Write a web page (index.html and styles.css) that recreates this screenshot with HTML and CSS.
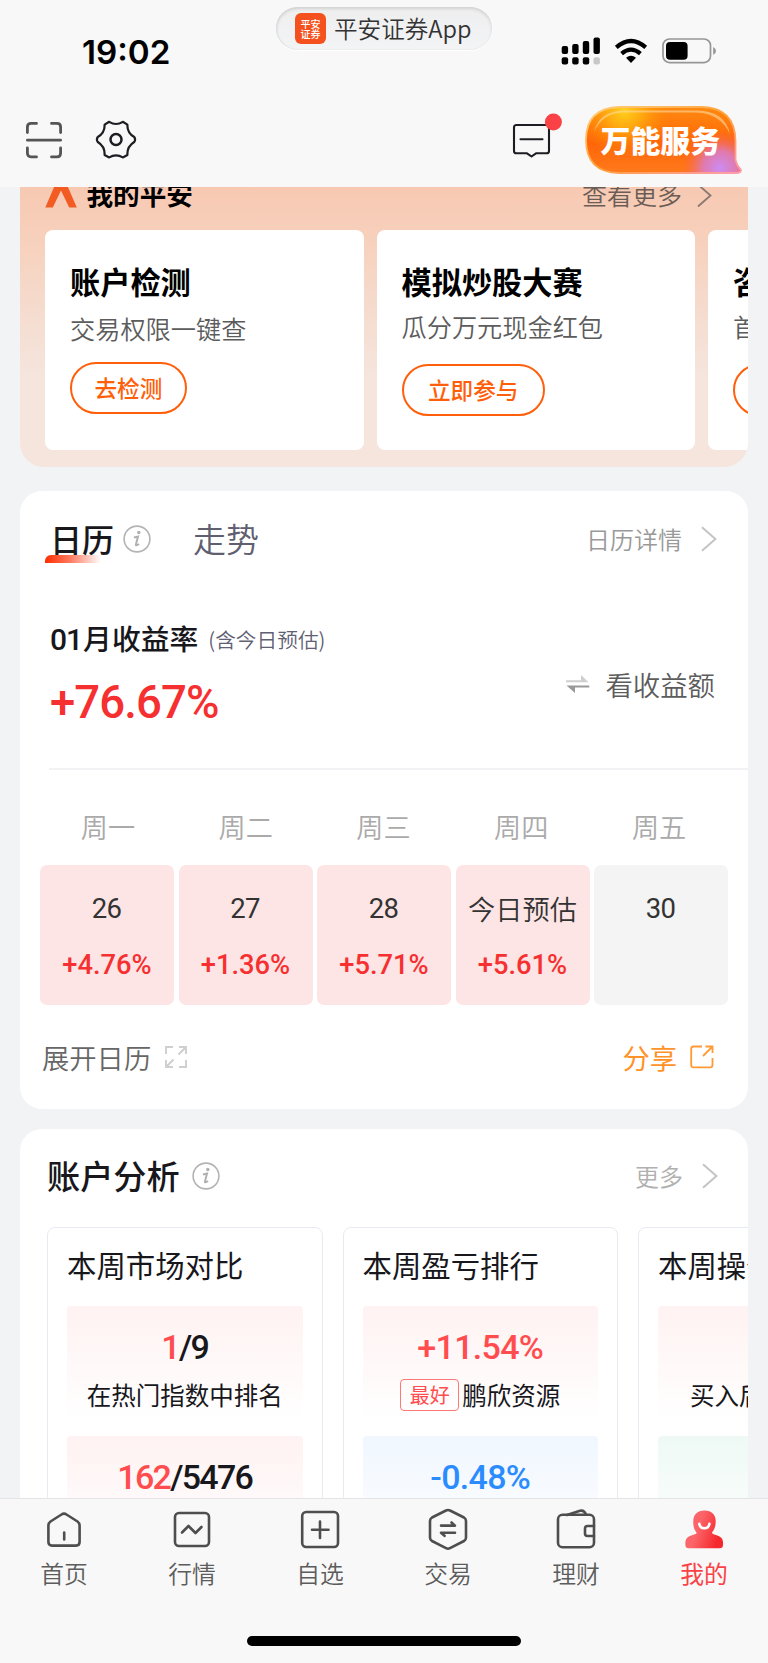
FILE: index.html
```
<!DOCTYPE html>
<html lang="zh-CN">
<head>
<meta charset="utf-8">
<title>平安证券</title>
<link rel="stylesheet" href="styles.css">
</head>
<body>
<svg width="0" height="0" class="defs">
  <defs>
    <symbol id="info" viewBox="0 0 28 28">
      <circle cx="14" cy="14" r="12.9" fill="none" stroke="#b4b4b4" stroke-width="1.6"/>
      <circle cx="15.8" cy="7.5" r="1.7" fill="#b0b0b0"/>
      <path d="M11 12.4 L15 11.6 L12.9 19.6 Q12.8 21.4 16 19" fill="none" stroke="#b0b0b0" stroke-width="2"/>
    </symbol>
    <symbol id="chevron" viewBox="0 0 16 26">
      <path d="M1 1.2 L14.4 13 L1 24.8" fill="none" stroke="currentColor" stroke-width="2"/>
    </symbol>
  </defs>
</svg>

<header class="header">
  <div class="status">
    <div class="time">19:02</div>
    <div class="app-pill">
      <div class="app-icon"><span>平安</span><span>证券</span></div>
      <span class="app-name">平安证券App</span>
    </div>
    <svg class="status-icons" width="160" height="32" viewBox="558 36 160 32">
      <g fill="#000">
        <rect x="561.7" y="46" width="6.4" height="8" rx="2"/>
        <rect x="572.2" y="44" width="6.4" height="10" rx="2"/>
        <rect x="582.8" y="41" width="6.4" height="13" rx="2"/>
        <rect x="593.5" y="37.5" width="6.4" height="16.5" rx="2"/>
        <rect x="561.7" y="57.3" width="6.4" height="7.2" rx="2"/>
        <rect x="572.2" y="57.3" width="6.4" height="7.2" rx="2"/>
        <rect x="582.8" y="57.3" width="6.4" height="7.2" rx="2"/>
        <rect x="593.5" y="57.3" width="6.4" height="7.2" rx="2" fill="#c8c8c8"/>
        <path d="M631 63 L626 57.8 Q631 53.8 636 57.8 Z"/>
      </g>
      <g fill="none" stroke="#000" stroke-width="4.2">
        <path d="M616.3 47.4 Q631 34.6 645.7 47.4"/>
        <path d="M621.6 53.6 Q631 45.6 640.4 53.6"/>
      </g>
      <rect x="663" y="39" width="47.5" height="23.6" rx="6.5" fill="none" stroke="#969696" stroke-width="1.7"/>
      <rect x="666" y="42" width="21.6" height="17.8" rx="4" fill="#000"/>
      <path d="M713.2 47 Q716 48.5 716 51 Q716 53.5 713.2 55 Z" fill="#969696"/>
    </svg>
  </div>
  <div class="toolbar">
    <svg class="scan" width="38" height="38" viewBox="0 0 38 38" fill="none" stroke="#555" stroke-width="2.8" stroke-linecap="round">
      <path d="M2.4 11.5 V6 Q2.4 2.4 6 2.4 H11.5 M26.5 2.4 H32 Q35.6 2.4 35.6 6 V11.5 M35.6 27 V32 Q35.6 35.9 32 35.9 H26.5 M11.5 35.9 H6 Q2.4 35.9 2.4 32 V27 M2.4 19.2 H35.6"/>
    </svg>
    <svg class="gear" width="42" height="40" viewBox="0 0 42 40" fill="none" stroke="#1e1e22" stroke-width="2.2" stroke-linejoin="round">
      <path d="M14.2 1.8 Q21 6.2 27.8 1.8 L32.4 4.6 Q32 12.6 39.2 17 Q41 19.5 39.2 22 Q32 26.4 32.4 35 L27.8 37.4 Q21 33.2 14.2 37.4 L9.6 35 Q10 26.4 2.8 22 Q1 19.5 2.8 17 Q10 12.6 9.6 4.6 Z"/>
      <circle cx="21" cy="19.6" r="5.5" stroke-width="2.5"/>
    </svg>
    <svg class="message" width="52" height="48" viewBox="510 112 52 48">
      <path d="M516.5 125 H546.5 Q549 125 549 127.5 V151 Q549 153.3 546.5 153.3 H536 L531.5 156.5 L527 153.3 H516.5 Q514 153.3 514 151 V127.5 Q514 125 516.5 125 Z M520.5 139.3 H542.5" fill="none" stroke="#1c1c22" stroke-width="2.1" stroke-linecap="round" stroke-linejoin="round"/>
      <circle cx="553.4" cy="122" r="8.5" fill="#fa4246"/>
    </svg>
    <svg class="service" width="160" height="70" viewBox="584 105 160 70">
      <defs>
        <linearGradient id="cta" x1="0" y1="0" x2="0" y2="1">
          <stop offset="0" stop-color="#ff8a10"/><stop offset=".55" stop-color="#ff6608"/><stop offset="1" stop-color="#ff7a1c"/>
        </linearGradient>
        <radialGradient id="cta-sun" gradientUnits="userSpaceOnUse" cx="624" cy="110" r="46">
          <stop offset="0" stop-color="#ffd21c"/><stop offset=".4" stop-color="#ffb010" stop-opacity=".85"/><stop offset="1" stop-color="#ff8a00" stop-opacity="0"/>
        </radialGradient>
        <radialGradient id="cta-violet" gradientUnits="userSpaceOnUse" cx="720" cy="168" r="38">
          <stop offset="0" stop-color="#cc8cf4"/><stop offset=".45" stop-color="#dd7bbd" stop-opacity=".9"/><stop offset="1" stop-color="#ff6040" stop-opacity="0"/>
        </radialGradient>
        <linearGradient id="cta-rim" x1="0" y1="0" x2="1" y2="1">
          <stop offset="0" stop-color="#ffd080"/><stop offset=".5" stop-color="#ffa038"/><stop offset="1" stop-color="#ff9cae"/>
        </linearGradient>
      </defs>
      <path d="M619 107 H702 Q735 108 735.5 141 V160 Q737 166 741 170 Q741 173 736 173 H619 Q586 172 586 140 Q586 108 619 107 Z" fill="url(#cta)"/>
      <path d="M619 107 H702 Q735 108 735.5 141 V160 Q737 166 741 170 Q741 173 736 173 H619 Q586 172 586 140 Q586 108 619 107 Z" fill="url(#cta-sun)"/>
      <path d="M619 107 H702 Q735 108 735.5 141 V160 Q737 166 741 170 Q741 173 736 173 H619 Q586 172 586 140 Q586 108 619 107 Z" fill="url(#cta-violet)" stroke="url(#cta-rim)" stroke-width="1.8"/>
      <path d="M594 132 Q599 112 622 110.5 H697 Q725 111 730 134 Q720 113 696 112.5 H622 Q603 113 594 132 Z" fill="#ffd9a0" opacity=".6"/>
      <text class="service-text" x="600.5" y="152">万能服务</text>
    </svg>
  </div>
</header>

<main class="content">
  <section class="promo">
    <div class="promo-head">
      <svg width="32" height="40" viewBox="0 0 32 40"><path d="M0.3 39.5 L9.5 18 H22.5 L31.8 39.5 H24.2 L16 22.6 L7.8 39.5 Z" fill="#f25c22"/></svg>
      <span class="promo-title">我的平安</span>
      <span class="promo-more">查看更多</span>
      <svg class="promo-chevron" width="15" height="25"><use href="#chevron"/></svg>
    </div>
    <div class="promo-list">
      <article class="promo-card">
        <h3>账户检测</h3><p>交易权限一键查</p><button>去检测</button>
      </article>
      <article class="promo-card alt">
        <h3>模拟炒股大赛</h3><p>瓜分万元现金红包</p><button>立即参与</button>
      </article>
      <article class="promo-card alt">
        <h3>咨询</h3><p>首次</p><button>去看看</button>
      </article>
    </div>
  </section>

  <section class="calendar">
    <div class="card-head">
      <span class="tab active">日历</span>
      <svg class="info-icon" width="28" height="28"><use href="#info"/></svg>
      <span class="tab second">走势</span>
      <span class="more">日历详情</span>
      <svg class="chevron" width="16" height="26"><use href="#chevron"/></svg>
    </div>
    <div class="yield">
      <div class="yield-main">
        <div class="yield-label"><b><i class="num">01</i>月收益率</b><small>(含今日预估)</small></div>
        <div class="yield-value num">+76.67%</div>
      </div>
      <div class="switch">
        <svg width="26" height="20" viewBox="0 0 26 20"><path d="M1 6.3 H16 V1 L23.5 8.2 H1 Z" fill="#cfcfcf"/><path d="M24.3 11.5 V13.6 H10 V19 L1.5 11.5 Z" fill="#999"/></svg>
        <span>看收益额</span>
      </div>
    </div>
    <div class="weekdays"><span>周一</span><span>周二</span><span>周三</span><span>周四</span><span>周五</span></div>
    <div class="days">
      <div class="day"><span class="num">26</span><b class="num">+4.76%</b></div>
      <div class="day"><span class="num">27</span><b class="num">+1.36%</b></div>
      <div class="day"><span class="num">28</span><b class="num">+5.71%</b></div>
      <div class="day"><span class="today">今日预估</span><b class="num">+5.61%</b></div>
      <div class="day idle"><span class="num">30</span></div>
    </div>
    <div class="calendar-foot">
      <span>展开日历</span>
      <svg width="22" height="22" viewBox="0 0 22 22" fill="none" stroke="#cfcfcf" stroke-width="1.9"><path d="M1 8 V1 H8 M14 1 H21 V8 M21 1 L13.5 8.5 M21 14 V21 H14 M8 21 H1 V14 M1 21 L8.5 13.5"/></svg>
      <span class="share">分享</span>
      <svg width="24" height="24" viewBox="0 0 24 24" fill="none" stroke="#ff9a35" stroke-width="1.8"><path d="M12 1.5 H3.5 Q1.2 1.5 1.2 4 V20 Q1.2 22.4 3.5 22.4 H20 Q22.5 22.4 22.5 20 V13 M15.5 1.5 H22.5 V8 M22.5 1.5 L13 11"/></svg>
    </div>
  </section>

  <section class="analysis">
    <div class="card-head">
      <span class="analysis-title">账户分析</span>
      <svg class="info-icon" width="28" height="28"><use href="#info"/></svg>
      <span class="more pale">更多</span>
      <svg class="chevron" width="16" height="26"><use href="#chevron"/></svg>
    </div>
    <div class="panels">
      <article class="panel">
        <h4>本周市场对比</h4>
        <div class="stat"><div class="figure tight num"><em>1</em>/9</div><div class="caption">在热门指数中排名</div></div>
        <div class="stat"><div class="figure tight num"><em>162</em>/5476</div></div>
      </article>
      <article class="panel">
        <h4>本周盈亏排行</h4>
        <div class="stat"><div class="figure num"><em>+11.54%</em></div><div class="caption"><span class="tag">最好</span>鹏欣资源</div></div>
        <div class="stat blue"><div class="figure num">-0.48%</div></div>
      </article>
      <article class="panel">
        <h4>本周操作统计</h4>
        <div class="stat"><div class="figure num"></div><div class="caption">买入后平均涨跌</div></div>
        <div class="stat green"></div>
      </article>
    </div>
  </section>
</main>

<nav class="tabbar">
  <div class="tabs">
    <a><svg width="44" height="44" viewBox="0 0 44 44"><path d="M8.5 14.5 L19.5 7.5 Q22 5.6 24.5 7.5 L35.5 14.5 Q37.6 16 37.6 18.5 V35 Q37.6 38.6 34 38.6 H10 Q6.4 38.6 6.4 35 V18.5 Q6.4 16 8.5 14.5 Z M22.2 25.5 V32.5"/></svg>首页</a>
    <a><svg width="44" height="44" viewBox="0 0 44 44"><rect x="5" y="6" width="34" height="33" rx="4"/><path d="M12 25.5 L18.5 19 L25.5 26 L31.5 20"/></svg>行情</a>
    <a><svg width="44" height="44" viewBox="0 0 44 44"><rect x="4.2" y="5" width="35.8" height="35" rx="4"/><path d="M22 14.5 V31 M14 22.8 H30.5"/></svg>自选</a>
    <a><svg width="44" height="44" viewBox="0 0 44 44"><path d="M20 3.5 Q22 2.5 24 3.5 L38 10.5 Q40 11.7 40 14 V30.5 Q40 33 38 34 L24 41.2 Q22 42.2 20 41.2 L6 34 Q4 33 4 30.5 V14 Q4 11.7 6 10.5 Z M15 18.6 H29 L25.5 15.5 M29 25.8 H15 L18.5 28.8"/></svg>交易</a>
    <a><svg width="44" height="44" viewBox="0 0 44 44"><path d="M13 8 L26 3.8 Q30 2.6 32 7.5"/><rect x="4" y="7.8" width="36" height="32.4" rx="4.5"/><path d="M40 19 H33.5 Q31 19 31 21.5 V26.5 Q31 29 33.5 29 H40"/></svg>理财</a>
    <a class="current"><svg width="44" height="44" viewBox="0 0 44 44">
      <defs><linearGradient id="me" x1="0" y1="0" x2="1" y2=".35"><stop offset=".45" stop-color="#fb6468"/><stop offset="1" stop-color="#f5292d"/></linearGradient></defs>
      <path class="solid" d="M22.5 3.5 C30 3.5 34 8 33.7 15 C33.5 20 32 23 30 25.5 Q30 27.3 34 28 Q41 30 41 35 V38 Q41 41.2 37.5 41.2 H7 Q3.4 41.2 3.4 38 V35 Q3.4 30 10.5 28 Q15 27.3 14.5 25.5 C12.5 23 11.2 20 11.3 15 C11 8 15 3.5 22.5 3.5 Z" fill="url(#me)"/>
      <path class="smile" d="M17.3 16.8 Q18 21.3 22.3 21.3 Q26.8 21.3 27.4 16.8"/></svg>我的</a>
  </div>
  <div class="home-bar"></div>
</nav>
</body>
</html>
```

FILE: styles.css
```
* { box-sizing: border-box; margin: 0; padding: 0; }

body {
  width: 768px;
  height: 1663px;
  overflow: hidden;
  display: flex;
  flex-direction: column;
  background: #f2f3f5;
  color: #17171c;
  font-family: "Noto Sans CJK SC", sans-serif;
}

svg { display: block; flex: none; }
.defs { position: absolute; }
.num { font-family: Roboto, "Noto Sans CJK SC", sans-serif; font-style: normal; }

/* header */
.header { height: 187px; flex: none; background: #f8f8f8; }
.status {
  height: 100px;
  display: grid;
  grid-template-columns: 1fr 216px 1fr;
  align-items: start;
}
.time {
  padding: 32px 0 0 82px;
  font: 600 33.2px/40px Inter, sans-serif;
  color: #000;
}
.app-pill {
  height: 43px;
  margin-top: 7px;
  padding-left: 19px;
  display: flex;
  align-items: center;
  border-radius: 22px;
  background: linear-gradient(#eeeeef, #f3f4f5);
  box-shadow: inset 0 2px 3px #d2d2d2, inset 1px 0 2px #e0e0e0, 0 1px 1px #fff;
}
.app-icon {
  width: 31px;
  height: 31px;
  border-radius: 6px;
  background: #f4511e;
  color: #fff;
  font-size: 10px;
  font-weight: 500;
  line-height: 10px;
  display: flex;
  flex-direction: column;
  align-items: center;
  justify-content: center;
}
.app-name { margin: -2px 0 0 8px; font-size: 23.6px; line-height: 40px; font-weight: 350; color: #333; white-space: nowrap; }
.status-icons { margin: 36px 0 0 66px; }

.toolbar { height: 80px; padding: 0 24px 0 25px; display: flex; align-items: center; }
.gear { margin-left: 31.5px; }
.message { margin: 0 22px 8px auto; }
.service-text { font: 900 29.9px "Noto Sans CJK SC", sans-serif; fill: #fff; }

/* content */
.content { height: 1311px; flex: none; overflow: hidden; padding: 0 20px; }

.promo {
  height: 280px;
  padding-left: 25px;
  overflow: hidden;
  border-radius: 0 0 24px 24px;
  background: linear-gradient(#f7c9b3, #f7d0bb 18%, #f5dccf 45%, #f5e5dd 68%, #f5e5dd);
}
.promo-head { height: 43px; display: flex; align-items: flex-start; padding-right: 36px; }
.promo-head svg:first-child { margin-top: -19px; }
.promo-title { margin: -13px 0 0 9.5px; font-size: 26.6px; line-height: 40px; font-weight: 700; color: #000; }
.promo-more { margin: -13px 15px 0 auto; font-size: 25px; line-height: 40px; font-weight: 350; color: #6b5d56; }
.promo-chevron { margin-top: -4px; color: #8c7a72; }
.promo-list { display: flex; gap: 13px; }
.promo-card {
  width: 318.5px;
  height: 220px;
  flex: none;
  padding: 31px 25px 0;
  border-radius: 8px;
  background: #fff;
}
.promo-card h3 { font-size: 30.2px; line-height: 40px; font-weight: 600; color: #000; white-space: nowrap; }
.promo-card p { margin-top: 7px; font-size: 25.2px; line-height: 40px; font-weight: 350; color: #5c5c5c; }
.promo-card button {
  display: block;
  height: 52px;
  margin-top: 14px;
  padding: 0 22.5px;
  border: 2px solid #ff5f0a;
  border-radius: 26px;
  background: none;
  color: #ff5f0a;
  font: 500 22.6px/44px "Noto Sans CJK SC", sans-serif;
}
.promo-card.alt p { margin-top: 5px; }
.promo-card.alt button { margin-top: 18px; padding: 0 24.5px; }

.card-head { display: flex; align-items: center; padding-right: 31px; }
.more { margin-left: auto; font-size: 24px; line-height: 40px; color: #999; font-weight: 350; }
.more.pale { color: #b0b0b0; }
.chevron { margin-left: 19px; color: #c4c4c4; }
.info-icon { margin-left: 10px; }

.calendar { height: 618px; margin-top: 24px; border-radius: 22px; background: #fff; }
.calendar .card-head { height: 96px; padding-left: 30px; }
.tab { font-size: 33px; line-height: 44px; margin-top: -2px; color: #5f5f70; font-weight: 350; white-space: nowrap; }
.tab.active {
  width: 63px;
  color: #17171c;
  font-weight: 500;
  font-size: 32px;
}
.tab.active::after {
  content: "";
  display: block;
  width: 56px;
  height: 8px;
  margin: -5px 0 -3px -5px;
  border-top-left-radius: 6px;
  background: linear-gradient(90deg, #ff2d00, #ff7a60 45%, #fff);
}
.tab.second { margin-left: 42px; }

.yield {
  height: 183px;
  margin-left: 29px;
  padding: 30px 33px 0 1px;
  display: flex;
  justify-content: space-between;
  border-bottom: 2px solid #f2f2f4;
}
.yield-label { display: flex; align-items: center; height: 44px; }
.yield-label b { font-size: 28.8px; line-height: 44px; font-weight: 500; }
.yield-label .num { font-size: 30px; letter-spacing: -1px; margin-right: 1px; font-weight: 500; }
.yield-label small { margin-left: 10px; font-size: 20.7px; line-height: 44px; color: #606072; font-weight: 350; }
.yield-value { margin-top: 15px; font-size: 45.5px; line-height: 54px; font-weight: 500; letter-spacing: -.9px; color: #f63031; }
.switch { display: flex; align-items: center; gap: 14px; height: 40px; margin-top: 47px; font-size: 27.4px; line-height: 40px; color: #5c5c5c; font-weight: 350; }

.weekdays { display: grid; grid-template-columns: repeat(5, 1fr); margin: 37px 20px 0 19px; text-align: center; font-size: 27.2px; line-height: 38px; color: #aaa; font-weight: 350; }
.days { display: grid; grid-template-columns: repeat(5, 134px); justify-content: space-between; margin: 20px 20px 0; }
.day {
  height: 140px;
  padding-top: 25px;
  display: flex;
  flex-direction: column;
  align-items: center;
  border-radius: 7px;
  background: #fde5e5;
}
.day.idle { background: #f4f4f4; }
.day span { font-size: 27.5px; line-height: 38px; letter-spacing: -.8px; margin-right: 1px; color: #333; white-space: nowrap; }
.day .today { font-size: 27.2px; letter-spacing: 0; margin: -1px 0 1px; font-weight: 350; }
.day b { margin-top: 18px; font-size: 27.3px; line-height: 38px; font-weight: 500; color: #f63031; }
.calendar-foot { height: 40px; margin: 32px 34px 0 22px; display: flex; align-items: center; font-size: 27.3px; line-height: 40px; color: #666; font-weight: 350; }
.calendar-foot svg { margin-left: 14px; }
.calendar-foot .share { margin-left: auto; color: #ff9228; font-weight: 400; }
.calendar-foot .share + svg { margin-left: 13px; }

.analysis { height: 420px; margin-top: 20px; border-radius: 22px 22px 0 0; background: #fff; overflow: hidden; }
.analysis .card-head { height: 98px; padding: 0 30px 4px 27px; }
.analysis-title { margin-top: -2px; font-size: 33.2px; line-height: 44px; font-weight: 500; }
.analysis .info-icon { margin-left: 12px; }
.panels { display: flex; gap: 20px; padding-left: 27px; }
.panel {
  width: 275.5px;
  height: 340px;
  flex: none;
  padding: 16px 19px 0;
  border: 1px solid #e9e9f1;
  border-radius: 8px;
}
.panel h4 { font-size: 29.4px; line-height: 40px; font-weight: 400; white-space: nowrap; }
.stat { height: 116px; margin-bottom: 14px; padding-top: 21px; border-radius: 4px; background: linear-gradient(#fff2f2, #fff); text-align: center; }
.panel h4 + .stat { margin-top: 22px; }
.stat.blue { background: linear-gradient(#f0f7ff, #fff); color: #2b8cff; }
.stat.green { background: linear-gradient(#eef9f5, #fff); }
.figure { height: 40px; font-size: 34px; line-height: 40px; font-weight: 500; letter-spacing: -.7px; }
.figure.tight { letter-spacing: -1.7px; }
.figure em { font-style: normal; color: #ff4d4f; }
.caption { margin-top: 8px; height: 40px; display: flex; align-items: center; justify-content: center; font-size: 24.5px; line-height: 38px; white-space: nowrap; }
.tag { height: 32px; width: 59px; margin-right: 3px; border: 1.5px solid #f77; border-radius: 4px; color: #ff4d4f; font-size: 20px; line-height: 29px; }

/* tab bar */
.tabbar { height: 165px; flex: none; border-top: 1px solid #e4e4e6; background: #f8f8f8; }
.tabs { display: grid; grid-template-columns: repeat(6, 1fr); height: 137px; }
.tabs a { display: flex; flex-direction: column; align-items: center; padding-top: 8px; font-size: 23.8px; line-height: 36px; color: #5c5c5c; font-weight: 350; }
.tabs svg { margin-bottom: 4px; fill: none; stroke: #4e4e4e; stroke-width: 2.6; stroke-linecap: round; stroke-linejoin: round; }
.tabs .current { color: #fa4246; font-weight: 400; }
.tabs .solid { stroke: none; }
.tabs .smile { stroke: #fff; }
.home-bar { width: 274px; height: 10px; margin: 0 auto; border-radius: 5px; background: #000; }
```
